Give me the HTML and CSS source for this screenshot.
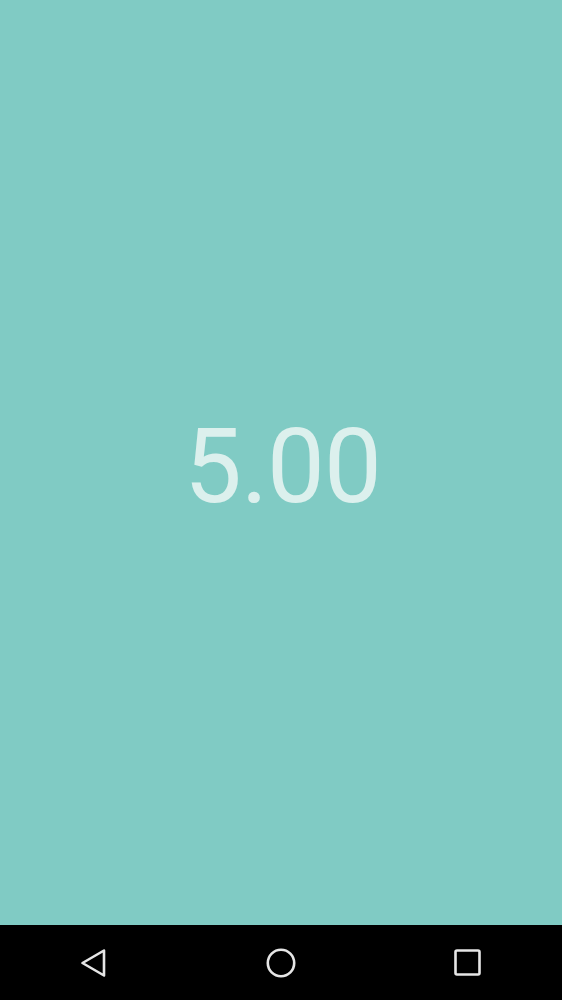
FILE: index.html
```html
<!DOCTYPE html>
<html>
<head>
<meta charset="utf-8">
<link rel="stylesheet" href="styles.css">
</head>
<body>
<div class="screen">
  <main class="content">
    <div class="value">5.00</div>
  </main>
  <nav class="navbar">
    <svg class="nav-icon" width="30" height="32" viewBox="0 0 30 32">
      <path d="M25 3.5 L3.5 16 L25 28.5 Z" fill="none" stroke="#e6e6e6" stroke-width="2.6" stroke-linejoin="round"/>
    </svg>
    <svg class="nav-icon" width="32" height="32" viewBox="0 0 32 32">
      <circle cx="16" cy="16" r="13.2" fill="none" stroke="#e6e6e6" stroke-width="2.6"/>
    </svg>
    <svg class="nav-icon" width="30" height="30" viewBox="0 0 30 30">
      <rect x="2.5" y="2.5" width="24" height="24" rx="1.5" fill="none" stroke="#e6e6e6" stroke-width="2.6"/>
    </svg>
  </nav>
</div>
</body>
</html>
```

FILE: styles.css
```css
html, body {
  margin: 0;
  padding: 0;
}
body {
  width: 562px;
  height: 1000px;
  overflow: hidden;
  font-family: Roboto, "Noto Sans", sans-serif;
}
.screen {
  display: flex;
  flex-direction: column;
  height: 1000px;
}
.content {
  flex: 1;
  background: #80cbc4;
  display: flex;
  align-items: center;
  justify-content: center;
}
.value {
  font-size: 103px;
  line-height: 1;
  color: #dcf0ed;
  padding-top: 8px;
  padding-left: 3px;
  letter-spacing: -1px;
}
.navbar {
  height: 75px;
  background: #000;
  display: grid;
  grid-template-columns: 1fr 1fr 1fr;
  align-items: center;
  justify-items: center;
}
.nav-icon {
  display: block;
}
```
